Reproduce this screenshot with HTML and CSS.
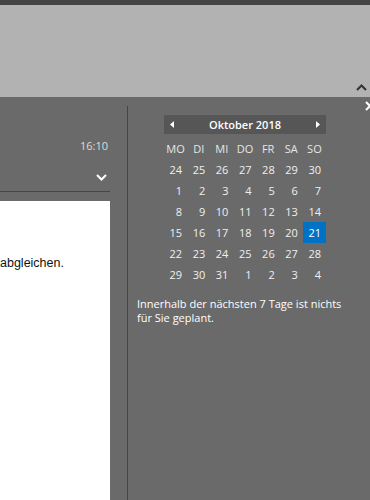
FILE: index.html
```html
<!DOCTYPE html>
<html lang="de">
<head>
    <meta charset="UTF-8">
    <meta name="viewport" content="width=device-width, initial-scale=1.0">
    <title>Kalender</title>
    <link rel="stylesheet" href="styles.css">
</head>
<body>
    <div class="topbar"></div>
    <div class="ribbon">
        <svg class="collapse" width="11" height="7" viewBox="0 0 11 7">
            <polyline points="1,6 5.5,1.5 10,6" fill="none" stroke="#333" stroke-width="2"/>
        </svg>
    </div>
    <div class="main">
        <div class="mail">
            <div class="time">16:10</div>
            <div class="expand">
                <svg width="11" height="7" viewBox="0 0 11 7">
                    <polyline points="1,1 5.5,5.5 10,1" fill="none" stroke="#fff" stroke-width="2"/>
                </svg>
            </div>
            <div class="rule"></div>
            <div class="body-text">
                <p>abgleichen.</p>
            </div>
        </div>
        <div class="divider"></div>
        <div class="peek">
            <svg class="close" width="10" height="10" viewBox="0 0 10 10">
                <path d="M1 1 L9 9 M9 1 L1 9" stroke="#fff" stroke-width="2"/>
            </svg>
            <div class="calendar">
                <div class="cal-header">
                    <svg width="4" height="7" viewBox="0 0 4 7"><polygon points="4,0 4,7 0,3.5" fill="#fff"/></svg>
                    <span>Oktober 2018</span>
                    <svg width="4" height="7" viewBox="0 0 4 7"><polygon points="0,0 0,7 4,3.5" fill="#fff"/></svg>
                </div>
                <div class="cal-grid weekdays">
                    <div>MO</div><div>DI</div><div>MI</div><div>DO</div><div>FR</div><div>SA</div><div>SO</div>
                </div>
                <div class="cal-grid dates">
                    <div>24</div><div>25</div><div>26</div><div>27</div><div>28</div><div>29</div><div>30</div>
                    <div>1</div><div>2</div><div>3</div><div>4</div><div>5</div><div>6</div><div>7</div>
                    <div>8</div><div>9</div><div>10</div><div>11</div><div>12</div><div>13</div><div>14</div>
                    <div>15</div><div>16</div><div>17</div><div>18</div><div>19</div><div>20</div><div class="today">21</div>
                    <div>22</div><div>23</div><div>24</div><div>25</div><div>26</div><div>27</div><div>28</div>
                    <div>29</div><div>30</div><div>31</div><div>1</div><div>2</div><div>3</div><div>4</div>
                </div>
            </div>
            <p class="agenda">Innerhalb der nächsten 7 Tage ist nichts für Sie geplant.</p>
        </div>
    </div>
</body>
</html>
```

FILE: styles.css
```css
body {
    margin: 0;
    height: 500px;
    overflow: hidden;
    background-color: #6a6a6a;
    font-family: "Open Sans", "Noto Sans", sans-serif;
    display: flex;
    flex-direction: column;
}

.topbar {
    height: 5px;
    background-color: #444444;
}

.ribbon {
    height: 92px;
    background-color: #b2b2b2;
    display: flex;
    justify-content: flex-end;
    align-items: flex-end;
    padding-right: 3px;
}

.collapse {
    margin-bottom: 6px;
}

.main {
    flex: 1;
    display: flex;
}

.mail {
    width: 110px;
    display: flex;
    flex-direction: column;
}

.time {
    margin-top: 41px;
    text-align: right;
    padding-right: 2px;
    font-size: 11px;
    line-height: 16px;
    color: #dcdcdc;
}

.expand {
    display: flex;
    justify-content: flex-end;
    padding-right: 3px;
    margin-top: 20px;
    height: 7px;
}

.rule {
    height: 1px;
    background-color: #464646;
    margin-top: 10px;
}

.body-text {
    flex: 1;
    margin-top: 9px;
    background-color: #ffffff;
}

.body-text p {
    margin: 55px 0 0 0;
    font-family: "Liberation Sans", Arial, sans-serif;
    font-size: 12.5px;
    color: #111;
}

.divider {
    width: 1px;
    margin-left: 17px;
    margin-top: 9px;
    background-color: #454545;
}

.peek {
    position: relative;
    flex: 1;
    padding: 18px 0 0 9px;
}

.close {
    position: absolute;
    top: 4px;
    right: -5px;
}

.calendar {
    width: 162px;
    margin-left: 27px;
}

.cal-header {
    height: 19px;
    background-color: #565656;
    display: flex;
    align-items: center;
    justify-content: space-between;
    padding: 0 6px;
    color: #fff;
    font-size: 11px;
    font-weight: 600;
}

.cal-grid {
    display: grid;
    grid-template-columns: repeat(7, 1fr);
    font-size: 11px;
    color: #f0f0f0;
}

.weekdays {
    margin-top: 4px;
}

.weekdays div {
    height: 21px;
    line-height: 21px;
    text-align: center;
    color: #e6e6e6;
}

.dates div {
    height: 21px;
    line-height: 21px;
    text-align: right;
    padding-right: 5px;
}

.dates .today {
    background-color: #0072c6;
    color: #fff;
}

.agenda {
    margin: 12px 0 0 0;
    width: 210px;
    font-size: 11px;
    line-height: 14px;
    color: #fff;
}
```
